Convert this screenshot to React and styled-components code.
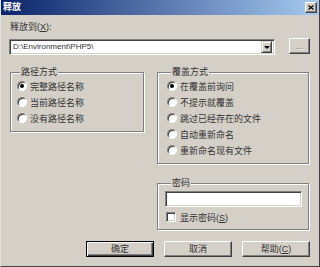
import React from 'react'
import styled, { createGlobalStyle } from 'styled-components'

const GlobalStyle = createGlobalStyle`
  html, body {
    margin: 0;
    padding: 0;
    background: #d4d0c8;
  }
  body {
    font-family: "Liberation Sans", "Noto Sans CJK SC", sans-serif;
    font-size: 9px;
    color: #333;
  }
  * {
    box-sizing: border-box;
  }
`

const Window = styled.div`
  width: 320px;
  height: 267px;
  background: #d4d0c8;
  border-left: 1px solid #e4e2dd;
  border-right: 1px solid #404040;
  border-bottom: 1px solid #404040;
  display: flex;
  flex-direction: column;
  overflow: hidden;
`

const TitleBar = styled.div`
  height: 15px;
  flex: none;
  display: flex;
  align-items: center;
  justify-content: space-between;
  padding: 0 2px 0 2px;
  background: linear-gradient(to right, #0a246a, #a6caf0);
  color: #fff;
  font-weight: bold;
  font-size: 9px;
  line-height: 15px;
`

const CloseButton = styled.div`
  width: 12px;
  height: 11px;
  background: #d4d0c8;
  border: 1px solid;
  border-color: #fff #404040 #404040 #fff;
  box-shadow: inset -1px -1px 0 #808080;
  display: flex;
  align-items: center;
  justify-content: center;
`

const Content = styled.div`
  flex: 1;
  display: flex;
  flex-direction: column;
  padding: 6px 9px 0 8px;
`

const FieldLabel = styled.div`
  line-height: 12px;
  margin-left: 1px;
`

const PathRow = styled.div`
  display: flex;
  align-items: flex-start;
  gap: 14px;
  margin-top: 5px;
`

const Sunken = styled.div`
  background: #fff;
  border: 1px solid;
  border-color: #808080 #fff #fff #808080;
  box-shadow: inset 1px 1px 0 #404040, inset -1px -1px 0 #d4d0c8;
`

const Combo = styled(Sunken)`
  flex: 1;
  height: 16px;
  margin-top: 1px;
  display: flex;
  align-items: center;
  justify-content: space-between;
  padding: 0 2px 0 3px;
`

const ComboText = styled.span`
  font-size: 8px;
  line-height: 12px;
  color: #333;
`

const DropButton = styled.div`
  width: 11px;
  height: 12px;
  background: #d4d0c8;
  border: 1px solid;
  border-color: #d4d0c8 #404040 #404040 #d4d0c8;
  box-shadow: inset 1px 1px 0 #fff, inset -1px -1px 0 #808080;
  display: flex;
  align-items: center;
  justify-content: center;
`

const Arrow = styled.span`
  width: 0;
  height: 0;
  border-left: 3px solid transparent;
  border-right: 3px solid transparent;
  border-top: 3px solid #000;
`

const RaisedButton = styled.button`
  width: ${p => p.$w || 68}px;
  height: 16px;
  padding: 0;
  margin: 0;
  background: #d4d0c8;
  font-family: inherit;
  font-size: 9px;
  line-height: 14px;
  color: ${p => (p.$disabled ? '#808080' : '#333')};
  text-shadow: ${p => (p.$disabled ? '1px 1px 0 #fff' : 'none')};
  border: 1px solid;
  border-color: ${p => (p.$default ? '#000' : '#fff #404040 #404040 #fff')};
  box-shadow: ${p =>
    p.$default
      ? 'inset 1px 1px 0 #fff, inset -1px -1px 0 #404040, inset -2px -2px 0 #808080'
      : 'inset -1px -1px 0 #808080'};
`

const Groups = styled.div`
  display: grid;
  grid-template-columns: 134px 152px;
  column-gap: 13px;
  align-items: start;
  margin: 11px 0 0 1px;
`

const Column = styled.div`
  display: flex;
  flex-direction: column;
  gap: 13px;
`

const Group = styled.fieldset`
  margin: 0;
  min-width: 0;
  padding: 0 6px ${p => p.$bottom ?? 5}px ${p => p.$left ?? 6}px;
  border: 1px solid #808080;
  box-shadow: 1px 1px 0 #fff, inset 1px 1px 0 #fff;
`

const Legend = styled.legend`
  padding: 0 1px;
  margin-left: ${p => p.$offset ?? 3}px;
  line-height: 12px;
  background: #d4d0c8;
`

const OptionRow = styled.label`
  display: flex;
  align-items: center;
  height: 16px;
  gap: 2px;
  white-space: nowrap;
`

const RadioDot = styled.span`
  width: 10px;
  height: 10px;
  flex: none;
  border-radius: 50%;
  background: #fff;
  border: 1px solid;
  border-color: #808080 #fff #fff #808080;
  box-shadow: inset 1px 1px 0 #404040;
  display: flex;
  align-items: center;
  justify-content: center;
  margin-right: 1px;
  &::after {
    content: '';
    width: 4px;
    height: 4px;
    border-radius: 50%;
    background: ${p => (p.$checked ? '#000' : 'transparent')};
  }
`

const CheckBox = styled(Sunken)`
  width: 10px;
  height: 10px;
  flex: none;
  margin: 0 2px 0 1px;
`

const PasswordInput = styled(Sunken)`
  height: 16px;
  margin-top: 2px;
`

const CheckRow = styled(OptionRow)`
  margin-top: 2px;
`

const ButtonRow = styled.div`
  display: flex;
  justify-content: flex-end;
  gap: 10px;
  margin-top: 11px;
`

const Radio = ({ checked, children }) => (
  <OptionRow>
    <RadioDot $checked={checked} />
    <span>{children}</span>
  </OptionRow>
)

const pathModes = ['完整路径名称', '当前路径名称', '没有路径名称']
const overwriteModes = ['在覆盖前询问', '不提示就覆盖', '跳过已经存在的文件', '自动重新命名', '重新命名现有文件']

export default function App() {
  return (
    <>
      <GlobalStyle />
      <Window>
        <TitleBar>
          <span>释放</span>
          <CloseButton>
            <svg width="6" height="5" viewBox="0 0 6 5">
              <path d="M0.5 0.5 L5.5 4.5 M5.5 0.5 L0.5 4.5" stroke="#000" strokeWidth="1.2" />
            </svg>
          </CloseButton>
        </TitleBar>
        <Content>
          <FieldLabel>
            释放到(<u>X</u>):
          </FieldLabel>
          <PathRow>
            <Combo>
              <ComboText>D:\Environment\PHP5\</ComboText>
              <DropButton>
                <Arrow />
              </DropButton>
            </Combo>
            <RaisedButton $w={21} $disabled>...</RaisedButton>
          </PathRow>
          <Groups>
            <Group $left={6}>
              <Legend $offset={3}>路径方式</Legend>
              {pathModes.map((m, i) => (
                <Radio key={m} checked={i === 0}>{m}</Radio>
              ))}
            </Group>
            <Column>
              <Group $left={9}>
                <Legend $offset={4}>覆盖方式</Legend>
                {overwriteModes.map((m, i) => (
                  <Radio key={m} checked={i === 0}>{m}</Radio>
                ))}
              </Group>
              <Group $left={7} $bottom={4}>
                <Legend $offset={6}>密码</Legend>
                <PasswordInput />
                <CheckRow>
                  <CheckBox />
                  <span>显示密码(<u>S</u>)</span>
                </CheckRow>
              </Group>
            </Column>
          </Groups>
          <ButtonRow>
            <RaisedButton $default>确定</RaisedButton>
            <RaisedButton>取消</RaisedButton>
            <RaisedButton>帮助(<u>C</u>)</RaisedButton>
          </ButtonRow>
        </Content>
      </Window>
    </>
  )
}
